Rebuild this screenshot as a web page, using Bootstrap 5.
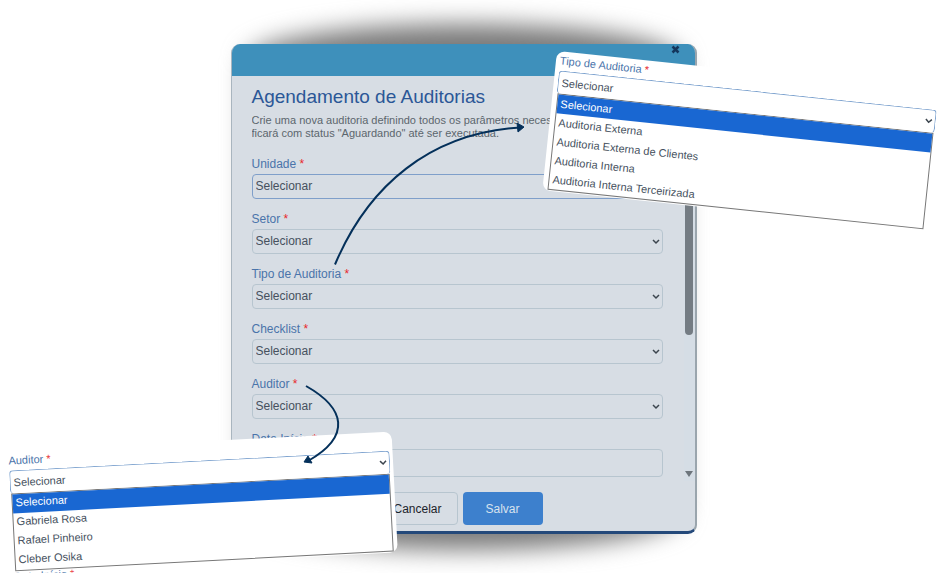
<!DOCTYPE html>
<html lang="pt-BR">
<head>
<meta charset="utf-8">
<meta name="viewport" content="width=device-width, initial-scale=1">
<title>Agendamento de Auditorias</title>
<link href="https://cdn.jsdelivr.net/npm/bootstrap@5.3.0/dist/css/bootstrap.min.css" rel="stylesheet">
<style>
  body { font-family: "Liberation Sans", Arial, sans-serif; font-size: 12px; line-height: 18px; color: #46515e; background: #fff; }
  .stage { min-height: 100vh; padding: 44px 16px 0 0; }
  .dialog-wrap { width: 466px; }
  .glow { left: 16px; right: 16px; top: -20px; bottom: -16px; background: #7a7a7a; border-radius: 50% / 7%; filter: blur(12px); }
  .dialog { background: #d7dde4; border-radius: 9px; border-left: 1px solid #a9b5bf; border-right: 2px solid #9aa5ad; border-bottom: 3px solid #24497a; }
  .dialog-top { height: 32px; background: #3e90bb; }
  .btn-x { width: 9px; height: 9px; margin: 1px 15px 0 0; }
  .scroll-area { height: 405px; }
  .fields { padding: 8px 0 0 20px; margin-right: 21px; }
  h1 { font-size: 19px; line-height: 25px; color: #2b5797; font-weight: 400; padding-bottom: 1px; }
  .intro { font-size: 11px; line-height: 13px; color: #5c666d; white-space: nowrap; }
  .lbl { display: block; line-height: 17px; padding-bottom: 1px; color: #4a74aa; margin: 0; }
  .req { color: #e8282c; }
  .fld { position: relative; margin-bottom: 12px; }
  .pick { display: block; width: 100%; height: 25px; padding: 0 3px 1px; appearance: none; border: 1px solid #b7c5cf; border-radius: 4px; background: transparent; color: #46515e; font-size: 12px; }
  .pick.on { border-color: #7f9fca; }
  .pick.tall { height: 28px; }
  .chev { position: absolute; right: 3px; bottom: 9px; width: 8px; height: 6px; fill: none; stroke: #3c454e; stroke-width: 1.5; }
  .track { width: 11px; background: #d5dde5; }
  .thumb { width: 8px; height: 259px; background: #747c83; border-radius: 4px; }
  .foot { height: 50px; padding: 11px 152px 0 0; gap: 5px; }
  .act { height: 33px; width: 80px; padding: 0; font-size: 12px; border-radius: 4px; }
  .act-cancel { color: #1c232b; border: 1px solid #b7c5cf; }
  .act-save, .act-save:hover { background: #3d80cd; color: #d7e2ee; }
  .pop { position: absolute; background: #fff; font-size: 11px; border-radius: 8px; }
  .pop .lbl { line-height: 19px; padding: 0; }
  .pop .pick { height: 23px; font-size: 11px; border-color: #7ea3cf; border-bottom: 0; background: #fff; }
  .pop .chev { bottom: 8px; }
  .pop .fld { margin: 0; }
  .opts { margin: 0 1px; border: 1px solid #777; padding: 0; list-style: none; }
  .opts li { height: 19px; line-height: 18px; padding-left: 3px; }
  .opts .cur { background: #1967d2; color: #fff; }
  .pop-type { left: 557px; top: 51px; width: 386px; padding: 0 2px 0 4px; transform: rotate(6deg); transform-origin: 0 0; height: 140px; }
  .pop-auditor { left: 0; top: 452px; width: 392px; padding: 0 3px 0 8px; transform: rotate(-3deg); transform-origin: 0 0; }
  .pop-auditor .opts li { line-height: 16px; }
  .next-lbl { height: 4px; margin-bottom: -3px; overflow: hidden; line-height: 11px; color: #4a74aa; }
  .arrows { left: 0; top: 0; pointer-events: none; }
</style>
<script src="https://cdn.jsdelivr.net/npm/bootstrap@5.3.0/dist/js/bootstrap.bundle.min.js"></script>
</head>
<body>
<main class="stage position-relative overflow-hidden">
  <div class="dialog-wrap position-relative mx-auto">
    <div class="glow position-absolute"></div>
    <section class="dialog position-relative overflow-hidden">
      <header class="dialog-top d-flex justify-content-end align-items-start">
        <button type="button" class="btn-x btn p-0 border-0 d-flex" aria-label="Fechar"><svg width="9" height="9" viewBox="0 0 9 9"><path d="M1.5 1.5l6 6M7.500 1.500l-6 6" stroke="#14365c" stroke-width="2.500"/></svg></button>
      </header>
      <div class="scroll-area d-flex overflow-hidden">
        <form class="fields flex-grow-1" id="agenda">
          <h1 class="mb-1">Agendamento de Auditorias</h1>
          <p class="intro mb-3 overflow-hidden">Crie uma nova auditoria definindo todos os parâmetros necessários. Ela<br>ficará com status "Aguardando" até ser executada.</p>
          <div class="fld"><label class="lbl" for="f1">Unidade <span class="req">*</span></label><select id="f1" class="pick on"><option>Selecionar</option></select></div>
          <div class="fld"><label class="lbl" for="f2">Setor <span class="req">*</span></label><select id="f2" class="pick"><option>Selecionar</option></select><svg class="chev" viewBox="0 0 8 6"><path d="M1 1l3 3 3-3"/></svg></div>
          <div class="fld"><label class="lbl" for="f3">Tipo de Auditoria <span class="req">*</span></label><select id="f3" class="pick"><option>Selecionar</option></select><svg class="chev" viewBox="0 0 8 6"><path d="M1 1l3 3 3-3"/></svg></div>
          <div class="fld"><label class="lbl" for="f4">Checklist <span class="req">*</span></label><select id="f4" class="pick"><option>Selecionar</option></select><svg class="chev" viewBox="0 0 8 6"><path d="M1 1l3 3 3-3"/></svg></div>
          <div class="fld"><label class="lbl" for="f5">Auditor <span class="req">*</span></label><select id="f5" class="pick"><option>Selecionar</option></select><svg class="chev" viewBox="0 0 8 6"><path d="M1 1l3 3 3-3"/></svg></div>
          <div class="fld"><label class="lbl" for="f6">Data Início <span class="req">*</span></label><input id="f6" class="pick tall" type="text"></div>
        </form>
        <div class="track d-flex flex-column align-items-center justify-content-between">
          <div class="thumb"></div>
          <svg class="mb-1" width="8" height="6" viewBox="0 0 8 6"><path d="M0 0h8L4 6z" fill="#6d757c"/></svg>
        </div>
      </div>
      <footer class="foot d-flex justify-content-end">
        <button type="button" class="btn act act-cancel">Cancelar</button>
        <button type="submit" form="agenda" class="btn act act-save">Salvar</button>
      </footer>
    </section>
  </div>

  <div class="pop pop-type">
    <div class="fld"><label class="lbl" for="p1">Tipo de Auditoria <span class="req">*</span></label><select id="p1" class="pick"><option>Selecionar</option></select><svg class="chev" viewBox="0 0 8 6"><path d="M1 1l3 3 3-3"/></svg></div>
    <ul class="opts"><li class="cur">Selecionar</li><li>Auditoria Externa</li><li>Auditoria Externa de Clientes</li><li>Auditoria Interna</li><li>Auditoria Interna Terceirizada</li></ul>
  </div>
  <div class="pop pop-auditor">
    <div class="fld"><label class="lbl" for="p2">Auditor <span class="req">*</span></label><select id="p2" class="pick"><option>Selecionar</option></select><svg class="chev" viewBox="0 0 8 6"><path d="M1 1l3 3 3-3"/></svg></div>
    <ul class="opts"><li class="cur">Selecionar</li><li>Gabriela Rosa</li><li>Rafael Pinheiro</li><li>Cleber Osika</li></ul>
    <div class="next-lbl">Data Início <span class="req">*</span></div>
  </div>

  <svg class="arrows position-absolute" width="943" height="573" viewBox="0 0 943 573" fill="none" stroke="#04305a" stroke-width="2">
    <path d="M335 264.500C368 186 430 133 520 127.500"/><path d="M517 123l7 4-6 5z" fill="#04305a" stroke-width="1"/>
    <path d="M306 386C345 408 352 436 308 461"/><path d="M308 456l-4 6 8 1z" fill="#04305a" stroke-width="1"/>
  </svg>
</main>
</body>
</html>
